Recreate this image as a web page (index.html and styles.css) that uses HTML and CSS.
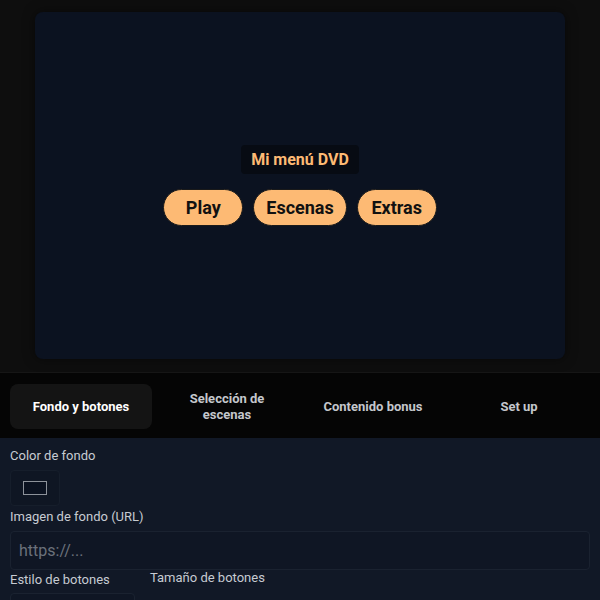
FILE: index.html
```html
<!DOCTYPE html>
<html>
<head>
    <title>Mi menú DVD</title>
    <link rel="stylesheet" href="styles.css">
</head>
<body>
    <div class="stage">
        <div class="preview">
            <div class="menu-title">Mi menú DVD</div>
            <div class="menu-buttons">
                <button class="menu-button">Play</button>
                <button class="menu-button">Escenas</button>
                <button class="menu-button">Extras</button>
            </div>
        </div>
    </div>

    <nav class="tabs">
        <button class="tab active">Fondo y botones</button>
        <button class="tab">Selección de escenas</button>
        <button class="tab">Contenido bonus</button>
        <button class="tab">Set up</button>
    </nav>

    <section class="panel">
        <label class="field-label">Color de fondo</label>
        <div class="color-picker"><span class="swatch"></span></div>

        <label class="field-label">Imagen de fondo (URL)</label>
        <input class="text-input" type="text" placeholder="https://...">

        <div class="row">
            <div class="col">
                <label class="field-label">Estilo de botones</label>
                <div class="select"></div>
            </div>
            <div class="col col-size">
                <label class="field-label">Tamaño de botones</label>
            </div>
        </div>
    </section>
</body>
</html>
```

FILE: styles.css
```css
body {
    margin: 0;
    background-color: #0f0f0f;
    font-family: Roboto, "Liberation Sans", sans-serif;
    overflow: hidden;
}

.stage {
    height: 372px;
    padding: 12px 35px 0;
    box-sizing: border-box;
    background-color: #0e0e0e;
}

.preview {
    height: 347px;
    border-radius: 8px;
    background-color: #0b1220;
    display: flex;
    flex-direction: column;
    align-items: center;
    justify-content: center;
    gap: 15px;
    box-shadow: 0 0 12px rgba(0, 0, 0, 0.5);
}

.menu-title {
    padding: 4px 10px;
    line-height: 21px;
    font-size: 16px;
    font-weight: bold;
    color: #fdba74;
    background-color: #070b13;
    border-radius: 4px;
}

.menu-buttons {
    display: flex;
    gap: 10px;
}

.menu-button {
    min-width: 80px;
    height: 37px;
    padding: 0 12px;
    border: 1px solid #1a1a1a;
    border-radius: 999px;
    background-color: #fdba74;
    color: #111;
    font-family: inherit;
    font-size: 18px;
    font-weight: bold;
}

.tabs {
    height: 66px;
    box-sizing: border-box;
    padding: 11px 10px 9px;
    display: grid;
    grid-template-columns: repeat(4, 1fr);
    gap: 4px;
    background-color: #050505;
    border-top: 1px solid #161616;
}

.tab {
    border: none;
    border-radius: 8px;
    background: transparent;
    color: #c4c7cc;
    font-family: inherit;
    font-size: 13px;
    font-weight: bold;
    line-height: 16px;
    padding: 0 30px;
}

.tab.active,
.tab:nth-child(3) {
    padding: 0 4px;
}

.tab.active {
    background-color: #141414;
    color: #fff;
}

.panel {
    height: 162px;
    padding: 10px 10px 0;
    box-sizing: border-box;
    background-color: #111826;
}

.field-label {
    display: block;
    font-size: 13px;
    line-height: 16px;
    color: #c7cbd2;
}

.color-picker {
    width: 50px;
    height: 36px;
    margin: 6px 0 3px;
    box-sizing: border-box;
    border: 1px solid #161e2b;
    border-radius: 4px;
    background-color: #0f1623;
    display: flex;
    align-items: center;
    justify-content: center;
}

.swatch {
    width: 22px;
    height: 12px;
    border: 1px solid #8d929a;
    background-color: #0b1220;
}

.text-input {
    display: block;
    width: 100%;
    height: 39px;
    margin: 6px 0 2px;
    box-sizing: border-box;
    padding: 0 8px;
    border: 1px solid #1a2230;
    border-radius: 4px;
    background-color: #0f1624;
    color: #ddd;
    font-family: inherit;
    font-size: 16px;
}

.text-input::placeholder {
    color: #6b717b;
}

.row {
    display: flex;
    gap: 15px;
}

.col {
    width: 125px;
}

.col-size {
    margin-top: -2px;
}

.select {
    height: 30px;
    margin-top: 5px;
    border: 1px solid #1a2230;
    border-radius: 4px;
    background-color: #0f1624;
}
```
